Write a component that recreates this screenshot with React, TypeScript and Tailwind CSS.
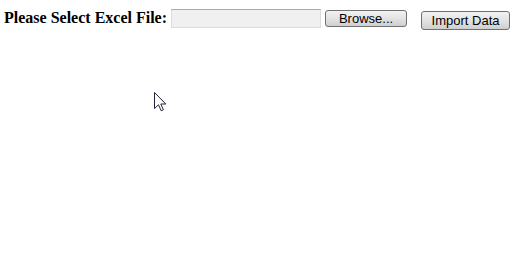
import React from "react";

export default function App() {
  return (
    <div className="relative w-[532px] h-[268px] bg-white overflow-hidden">
      <div className="flex items-start pl-[4px] pt-[9px]">
        <span
          className="text-[16px] leading-[18px] font-bold text-black whitespace-nowrap"
          style={{ fontFamily: '"Liberation Serif", "Times New Roman", serif' }}
        >
          Please Select Excel File:
        </span>
        <div className="ml-[4px] w-[150px] h-[19px] bg-[#f0f0f0] border border-[#dcdcdc] border-t-[#a9a9a9]" />
        <button
          className="ml-[4px] mt-[1px] w-[82px] h-[17px] rounded-[3px] border border-[#707070] bg-gradient-to-b from-[#f2f2f2] via-[#e3e3e3] to-[#cfcfcf] text-[13px] leading-[15px] text-black flex items-center justify-center"
          style={{ fontFamily: '"Liberation Sans", Arial, sans-serif' }}
        >
          Browse...
        </button>
        <button
          className="ml-[14px] mt-[2px] w-[89px] h-[19px] rounded-[3px] border border-[#707070] bg-gradient-to-b from-[#f2f2f2] via-[#e3e3e3] to-[#cfcfcf] text-[13px] leading-[17px] text-black flex items-center justify-center"
          style={{ fontFamily: '"Liberation Sans", Arial, sans-serif' }}
        >
          Import Data
        </button>
      </div>
      <svg
        className="absolute left-[154px] top-[92px]"
        width="13"
        height="20"
        viewBox="0 0 13 20"
      >
        <path
          d="M0.5 0.5 L0.5 16.5 L4.5 12.8 L7.2 18.8 L9.4 17.8 L6.8 12 L11.8 12 Z"
          fill="white"
          stroke="#2a1f3a"
          strokeWidth="1"
          strokeLinejoin="miter"
        />
      </svg>
    </div>
  );
}
